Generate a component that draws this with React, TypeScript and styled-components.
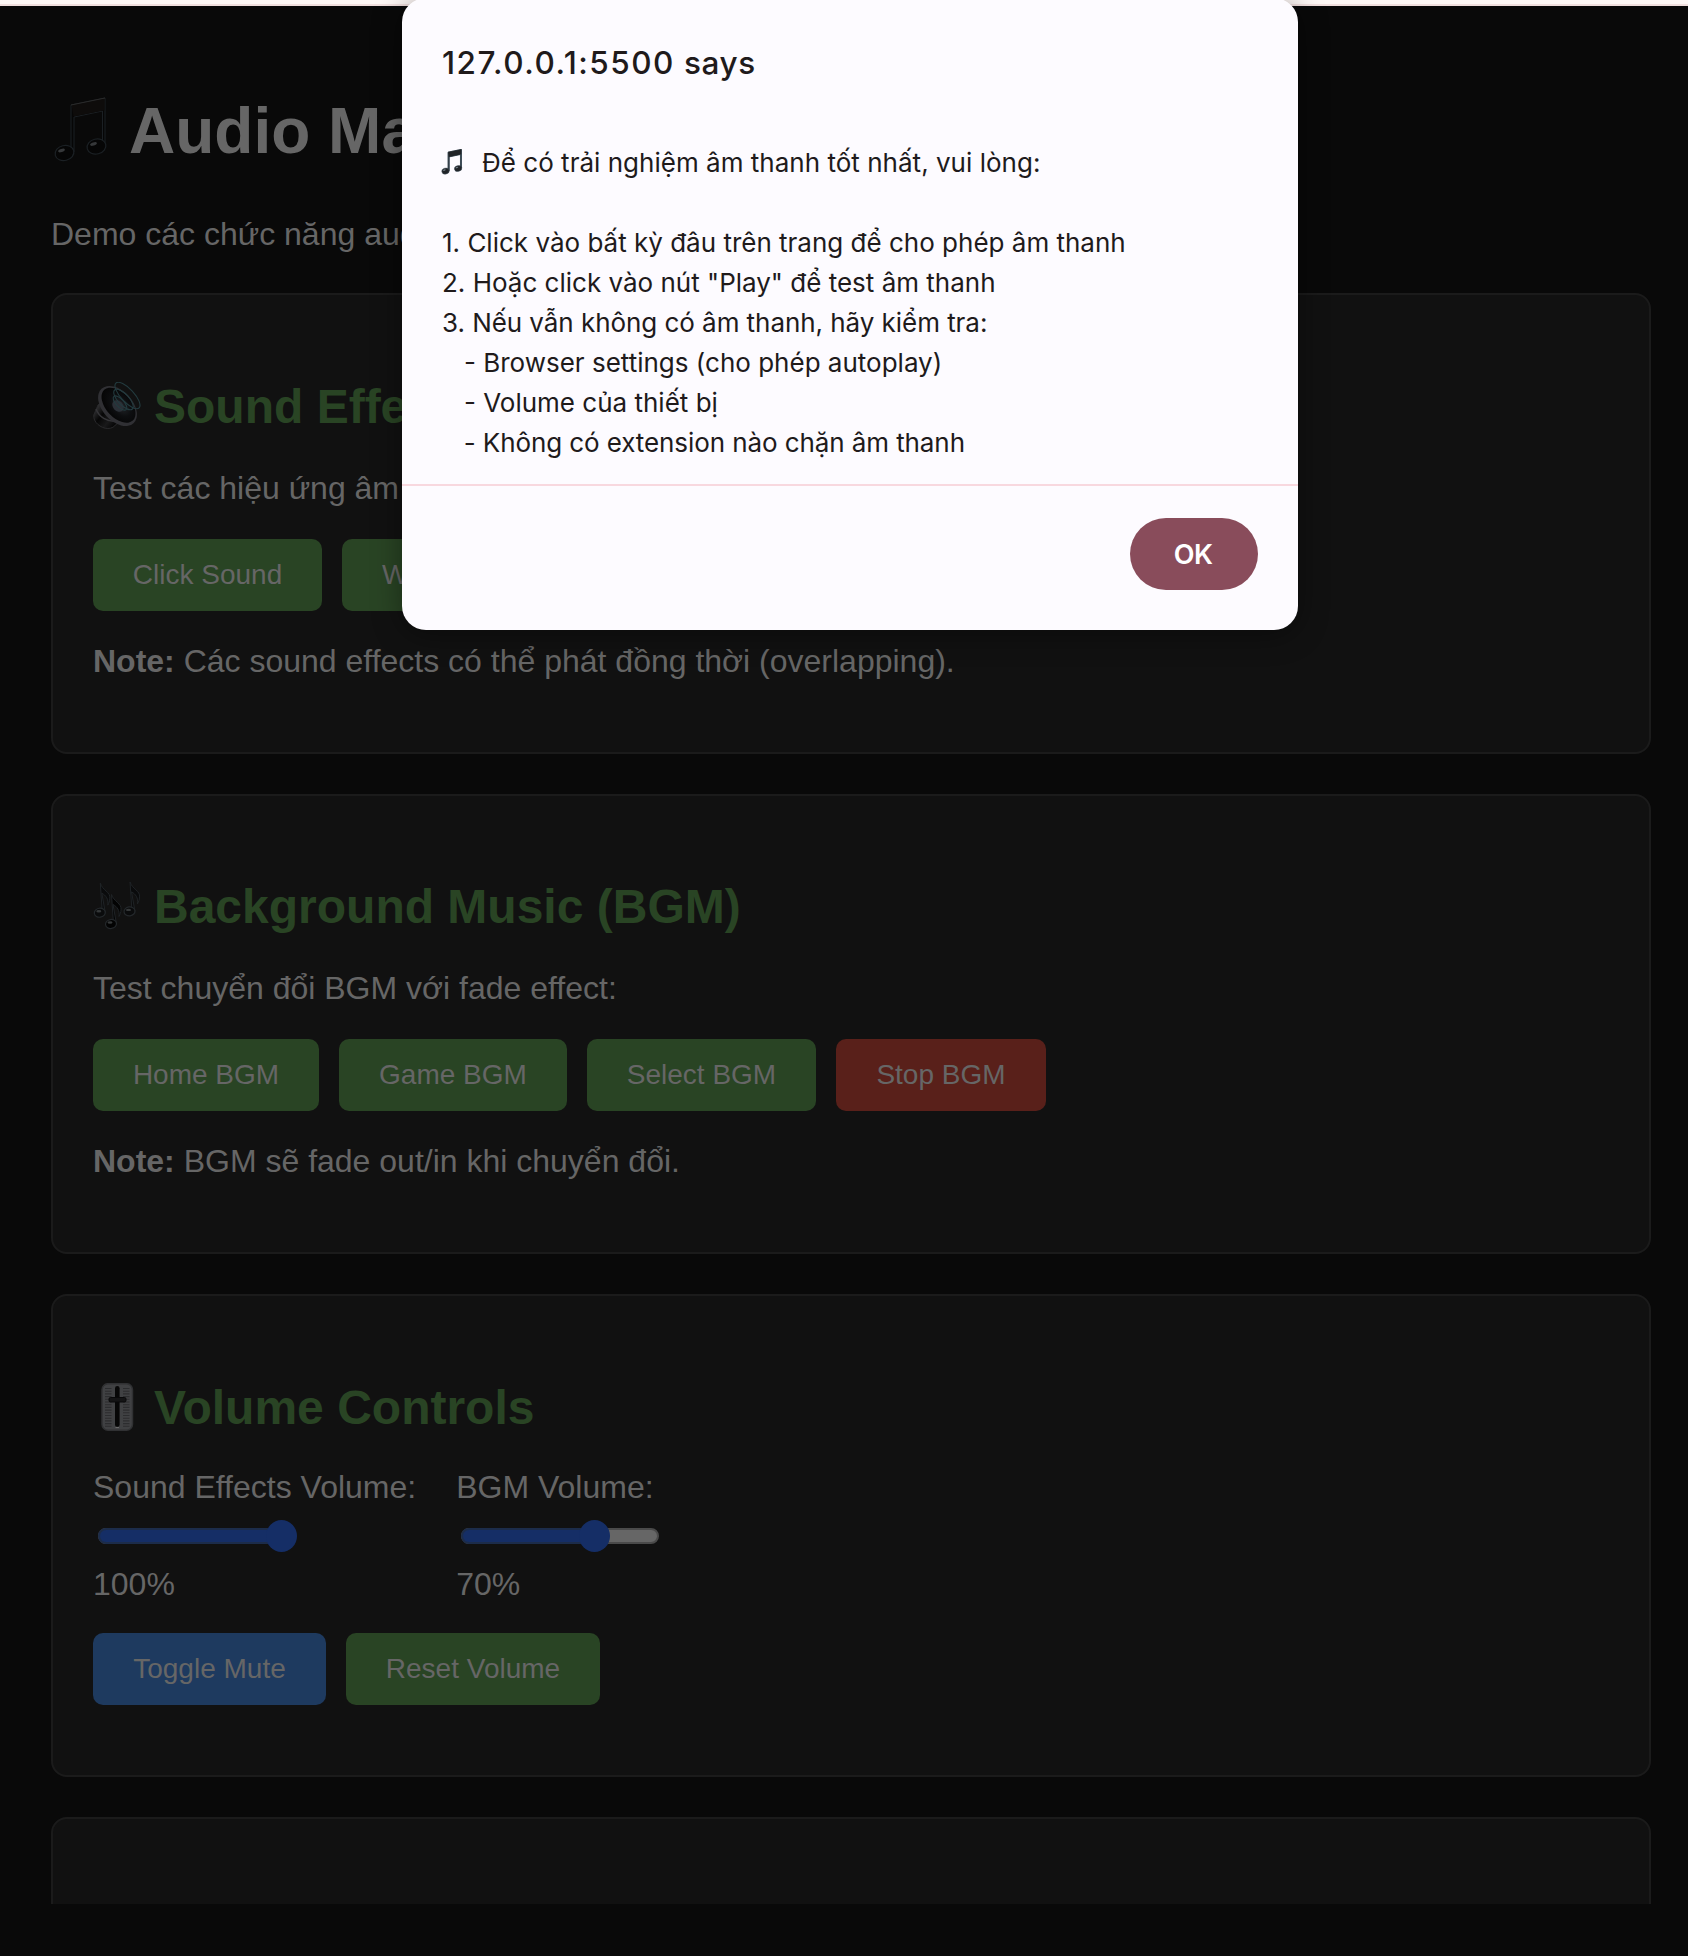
import React from "react";
import styled, { createGlobalStyle } from "styled-components";

const GlobalStyle = createGlobalStyle`
  *, *::before, *::after { box-sizing: border-box; }
  html, body { margin: 0; background: #090909; overflow: hidden; }
  body { font-family: "Liberation Sans", Arial, sans-serif; font-size: 32px; line-height: 36px; color: #666; }
`;

const Page = styled.div`
  height: 1956px;
  overflow: hidden;
  background: #090909;
`;

const BrowserEdge = styled.div`
  height: 6px;
  background: #fef8f6;
  border-bottom: 2px solid #f1e0df;
`;

const Viewport = styled.div`
  height: 1898px;
  overflow: hidden;
`;

const Container = styled.main`
  width: 1600px;
  margin-left: 51px;
  padding-top: 88px;
`;

const PageTitle = styled.h1`
  margin: 0;
  height: 74px;
  display: flex;
  align-items: center;
  font-size: 64px;
  line-height: 74px;
  white-space: nowrap;

  svg { margin: 0 18px 2px 0; }
`;

const Intro = styled.p`
  margin: 48px 0 41px;
  white-space: nowrap;
`;

const Card = styled.section<{ $h: number; $top?: number }>`
  height: ${(p) => p.$h}px;
  margin-bottom: 40px;
  padding: ${(p) => p.$top ?? 84}px 40px 0;
  background: #111;
  border: 2px solid #1b1b1b;
  border-radius: 16px;
`;

const Heading = styled.h2`
  display: flex;
  align-items: center;
  height: 56px;
  margin: 0;
  font-size: 48px;
  line-height: 56px;
  color: #294424;
  white-space: nowrap;

  svg { margin: 0 13px 3px 0; }
`;

const Text = styled.p<{ $mt: number }>`
  margin: ${(p) => p.$mt}px 0 0;
  height: 36px;
  white-space: nowrap;
`;

const ButtonRow = styled.div<{ $mt: number }>`
  display: flex;
  gap: 20px;
  margin-top: ${(p) => p.$mt}px;
`;

const tones = { green: "#294424", red: "#59201a", blue: "#1e3a5f" };

const Button = styled.button<{ $tone?: keyof typeof tones; $w: number }>`
  flex: none;
  width: ${(p) => p.$w}px;
  height: 72px;
  padding: 0;
  border: 0;
  border-radius: 10px;
  background: ${(p) => tones[p.$tone ?? "green"]};
  color: #666;
  font: 28px/32px "Liberation Sans", Arial, sans-serif;
  white-space: nowrap;
`;

const Volumes = styled.div`
  display: flex;
  gap: 40px;
  margin-top: 33px;
`;

const VolumeField = styled.div`
  display: flex;
  flex-direction: column;
  white-space: nowrap;
`;

const Track = styled.div`
  display: flex;
  align-items: center;
  width: 198px;
  height: 16px;
  margin: 23px 0 22px 5px;
  border: 2px solid #4a4a4a;
  border-radius: 8px;
  background: #666;
`;

const Fill = styled.div`
  height: 16px;
  margin-left: -2px;
  flex: none;
  border: 2px solid #1c2c4a;
  border-right: 0;
  border-radius: 8px 0 0 8px;
  background: #152e66;
`;

const Thumb = styled.div`
  flex: none;
  width: 31px;
  height: 32px;
  margin-left: -15px;
  border-radius: 50%;
  background: #152e66;
`;

const Dialog = styled.div`
  position: absolute;
  left: 402px;
  top: -2px;
  width: 896px;
  height: 632px;
  border-radius: 24px;
  background: #fdfbff;
  color: #201a1b;
  font-family: Inter, "Noto Sans", sans-serif;
  box-shadow: 0 4px 30px rgba(0, 0, 0, 0.4);
`;

const DialogTitle = styled.div`
  height: 124px;
  padding: 45px 40px 0;
  font-size: 31.5px;
  line-height: 40px;
  font-weight: 500;
  letter-spacing: 0.6px;
  white-space: nowrap;
`;

const Origin = styled.span`
  letter-spacing: 1.5px;
`;

const DialogBody = styled.div`
  height: 364px;
  padding: 21px 40px 0;
  border-bottom: 2px solid #f8d8df;
  font-size: 26px;
  line-height: 40px;
  white-space: pre;
`;

const Line = styled.div<{ $ls?: number }>`
  height: 40px;
  display: flex;
  align-items: center;
  letter-spacing: ${(p) => p.$ls ?? 0}px;

  svg { margin: 0 18px 2px -2px; }
`;

const DialogActions = styled.div`
  display: flex;
  justify-content: flex-end;
  padding: 32px 40px 0;
`;

const OkButton = styled.button`
  width: 128px;
  height: 72px;
  padding: 1px 2px 0 0;
  border: 0;
  border-radius: 36px;
  background: #894c5b;
  color: #fff;
  font: 600 27px/32px Inter, "Noto Sans", sans-serif;
  letter-spacing: -0.7px;
`;

function BeamedNotes({ width, height, dark }: { width: number; height: number; dark?: boolean }) {
  const ink = dark ? "#202327" : "#060606";
  const edge = dark ? "#3b4a55" : "#1b2024";
  const shine = dark ? "#7e8a92" : "#36383a";
  return (
    <svg width={width} height={height} viewBox="0 0 60 66" fill="none">
      <path d="M20 8v47h3V20l28.500-6v34H54V1z" fill={ink} stroke={edge} strokeWidth={dark ? 2.5 : 1} />
      <path d="M20.500 8.300 53.500 1.500v11.800L22.500 19.500z" fill={dark ? ink : "#0e0c0b"} />
      <path d="M20 8 54 1" stroke={dark ? ink : "#2a2a2a"} strokeWidth="1" />
      <ellipse cx="13.500" cy="56" rx="9.500" ry="7.500" transform="rotate(-14 13.500 56)" fill={ink} stroke={edge} strokeWidth="1.200" />
      <ellipse cx="45.500" cy="49.500" rx="9.500" ry="7.500" transform="rotate(-14 45.500 49.500)" fill={ink} stroke={edge} strokeWidth="1.200" />
      <ellipse cx="10.500" cy="53.500" rx="3.500" ry="1.500" transform="rotate(-18 10.500 53.500)" fill={shine} />
      <ellipse cx="42.500" cy="47" rx="3.500" ry="1.500" transform="rotate(-18 42.500 47)" fill={shine} />
    </svg>
  );
}

function SpeakerIcon() {
  return (
    <svg width="48" height="48" viewBox="0 0 48 48" fill="none">
      <defs>
        <linearGradient id="magnet" x1="0" y1="30" x2="20" y2="46" gradientUnits="userSpaceOnUse">
          <stop stopColor="#303032" />
          <stop offset=".35" stopColor="#060606" />
          <stop offset=".7" stopColor="#19191a" />
          <stop offset="1" stopColor="#050505" />
        </linearGradient>
        <radialGradient id="cone" cx=".55" cy=".45" r=".6">
          <stop stopColor="#24272b" />
          <stop offset=".5" stopColor="#0d0e10" />
          <stop offset="1" stopColor="#040404" />
        </radialGradient>
      </defs>
      <path d="M5 23 0.800 33c-1 7 7 13.500 14 13.500 4 0 7-2 8-4L29 38 10 18z" fill="url(#magnet)" stroke="#29292b" />
      <path d="M3 27c3 8 11 13 20 12" stroke="#353538" strokeWidth="1.500" />
      <ellipse cx="24.500" cy="24" rx="23.500" ry="15" transform="rotate(47 24.500 24)" fill="#303034" />
      <ellipse cx="25.500" cy="23.200" rx="21" ry="12.500" transform="rotate(47 25.500 23.200)" fill="url(#cone)" />
      <ellipse cx="25" cy="24" rx="6.500" ry="5" transform="rotate(47 25 24)" fill="#2b3037" />
      <g stroke="#233b3f" strokeWidth="1.100">
        <ellipse cx="27" cy="21" rx="9" ry="4" transform="rotate(47 27 21)" />
        <ellipse cx="30.500" cy="17.500" rx="13" ry="5.500" transform="rotate(47 30.500 17.500)" />
        <ellipse cx="34.500" cy="13.500" rx="17" ry="6.500" transform="rotate(47 34.500 13.500)" />
      </g>
    </svg>
  );
}

function TripleNotesIcon() {
  const note = (x: number, y: number, fill: string) => (
    <g transform={`translate(${x} ${y})`}>
      <path d="M6 .5c2 7 10.500 9 9.500 15 0 3-1 5-2 7 1-6-2-10-6-12L11 30H8z" fill={fill} stroke="#1f2326" strokeWidth="1" />
      <ellipse cx="5.500" cy="30" rx="5.500" ry="4.500" fill={fill} stroke="#24282b" strokeWidth="1.200" transform="rotate(-8 5.500 30)" />
      <ellipse cx="4.500" cy="28.500" rx="2.500" ry="1.200" fill="#353839" />
    </g>
  );
  return (
    <svg width="48" height="48" viewBox="0 0 48 48" fill="none">
      {note(1.3, 0.7, "#0a0b0c")}
      {note(31, -0.6, "#0a0b0c")}
      {note(12.5, 12, "#030303")}
    </svg>
  );
}

function LevelSliderIcon() {
  const ticks = Array.from({ length: 15 }, (_, i) => 5.5 + i * 2.7);
  return (
    <svg width="48" height="48" viewBox="0 0 48 48" fill="none">
      <rect x="9" y=".7" width="30.500" height="46.500" rx="6" fill="#404143" stroke="#303133" strokeWidth="1.500" />
      {ticks.map((y) => (
        <path key={y} d={`M12 ${y}h6.500M30 ${y}h6.500`} stroke="#2c2d2f" strokeWidth="1.100" />
      ))}
      <rect x="22" y="3" width="4.600" height="41" rx="2.300" fill="#070707" />
      <path d="M22.500 44.500h3.500" stroke="#6a6a6a" strokeWidth="1.200" />
      <rect x="16" y="14.500" width="17" height="4.500" rx="1.500" fill="#141415" stroke="#09090a" />
    </svg>
  );
}

function Slider({ value }: { value: number }) {
  const position = 15 + (value / 100) * 168;
  return (
    <Track>
      <Fill style={{ width: position }} />
      <Thumb />
    </Track>
  );
}

export default function App() {
  return (
    <Page>
      <GlobalStyle />
      <BrowserEdge />
      <Viewport>
        <Container>
          <PageTitle><BeamedNotes width={60} height={66} />Audio Ma</PageTitle>
          <Intro>Demo các chức năng aud</Intro>

          <Card $h={461}>
            <Heading><SpeakerIcon />Sound Effe</Heading>
            <Text $mt={35}>Test các hiệu ứng âm</Text>
            <ButtonRow $mt={33}>
              <Button $w={229}>Click Sound</Button>
              <Button $w={128}>Win</Button>
            </ButtonRow>
            <Text $mt={32}><b>Note:</b> Các sound effects có thể phát đồng thời (overlapping).</Text>
          </Card>

          <Card $h={460} $top={83}>
            <Heading><TripleNotesIcon />Background Music (BGM)</Heading>
            <Text $mt={35}>Test chuyển đổi BGM với fade effect:</Text>
            <ButtonRow $mt={33}>
              <Button $w={226}>Home BGM</Button>
              <Button $w={228}>Game BGM</Button>
              <Button $w={229}>Select BGM</Button>
              <Button $w={210} $tone="red">Stop BGM</Button>
            </ButtonRow>
            <Text $mt={32}><b>Note:</b> BGM sẽ fade out/in khi chuyển đổi.</Text>
          </Card>

          <Card $h={483}>
            <Heading><LevelSliderIcon />Volume Controls</Heading>
            <Volumes>
              <VolumeField>
                <span>Sound Effects Volume:</span>
                <Slider value={100} />
                <span>100%</span>
              </VolumeField>
              <VolumeField>
                <span>BGM Volume:</span>
                <Slider value={70} />
                <span>70%</span>
              </VolumeField>
            </Volumes>
            <ButtonRow $mt={31}>
              <Button $w={233} $tone="blue">Toggle Mute</Button>
              <Button $w={254}>Reset Volume</Button>
            </ButtonRow>
          </Card>

          <Card $h={460} />
        </Container>
      </Viewport>

      <Dialog>
        <DialogTitle><Origin>127.0.0.1:5500</Origin> says</DialogTitle>
        <DialogBody>
          <Line $ls={0.02}><BeamedNotes width={24} height={26} dark />Để có trải nghiệm âm thanh tốt nhất, vui lòng:</Line>
          <Line> </Line>
          <Line>1. Click vào bất kỳ đâu trên trang để cho phép âm thanh</Line>
          <Line>2. Hoặc click vào nút "Play" để test âm thanh</Line>
          <Line $ls={-0.05}>3. Nếu vẫn không có âm thanh, hãy kiểm tra:</Line>
          <Line>{"   - Browser settings (cho phép autoplay)"}</Line>
          <Line>{"   - Volume của thiết bị"}</Line>
          <Line $ls={-0.09}>{"   - Không có extension nào chặn âm thanh"}</Line>
        </DialogBody>
        <DialogActions>
          <OkButton>OK</OkButton>
        </DialogActions>
      </Dialog>
    </Page>
  );
}
